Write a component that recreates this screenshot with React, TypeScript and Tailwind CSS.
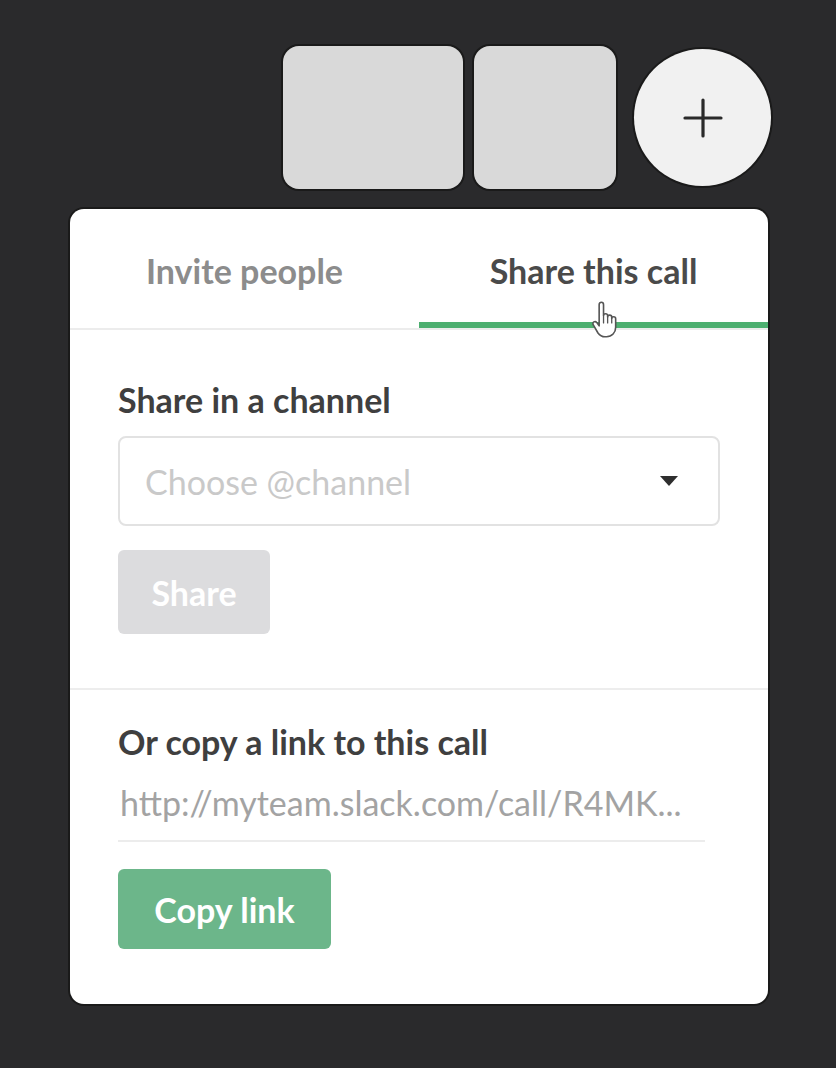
import React from 'react'

const HandCursor = () => (
    <svg width="30" height="38" viewBox="0 0 20 26" className="absolute left-[590px] top-[301px]">
        <path
            d="M6 2.5c0-1 .7-1.6 1.5-1.6S9 1.5 9 2.5V10c0-.8.6-1.3 1.4-1.3s1.4.5 1.4 1.3v1c0-.8.6-1.3 1.4-1.3s1.4.5 1.4 1.3v1c0-.8.6-1.2 1.3-1.2s1.4.5 1.4 1.3v5.8c0 3.8-2.6 6.6-6.3 6.6H10c-2.2 0-3.6-.9-4.8-2.6L2 16.4c-.5-.8-.3-1.7.4-2.1.7-.4 1.5-.2 2 .5L6 17V2.5z"
            fill="#ffffff"
            stroke="#555"
            strokeWidth="1.1"
            strokeLinejoin="round"
        />
        <path d="M9 10v5M11.8 11v4M14.6 12v3" stroke="#555" strokeWidth="0.9" strokeLinecap="round" />
    </svg>
)

const App = () => {
    return (
        <div className="relative w-[836px] h-[1068px] bg-[#2a2a2c] pl-[70px] pt-[46px]" style={{ fontFamily: 'Lato, "Open Sans", sans-serif' }}>
            <div className="flex items-center w-[701px] justify-end">
                <div className="w-[180px] h-[143px] rounded-[16px] bg-[#d9d9d9] ring-2 ring-[#1a1a1a]"></div>
                <div className="ml-[11px] w-[142px] h-[143px] rounded-[16px] bg-[#d9d9d9] ring-2 ring-[#1a1a1a]"></div>
                <div className="ml-[18px] w-[137px] h-[137px] rounded-full bg-[#f1f1f1] ring-2 ring-[#1a1a1a] flex items-center justify-center">
                    <svg width="40" height="40" viewBox="0 0 40 40">
                        <path d="M20 2v36M2 20h36" stroke="#2a2a2a" strokeWidth="3.2" strokeLinecap="round" />
                    </svg>
                </div>
            </div>

            <div className="mt-[20px] w-[698px] h-[795px] bg-white rounded-[14px] ring-2 ring-[#1a1a1a] flex flex-col overflow-hidden">
                <div className="flex h-[121px] border-b-2 border-[#ececec]">
                    <div className="w-1/2 flex items-center justify-center text-[34px] font-bold text-[#8c8c8c] pt-[4px]">Invite people</div>
                    <div className="w-1/2 flex flex-col">
                        <div className="flex-1 flex items-center justify-center text-[34px] font-bold text-[#4a4a4a] pt-[10px]">Share this call</div>
                        <div className="h-[6px] bg-[#4daf70]"></div>
                    </div>
                </div>

                <div className="px-[48px] pt-[50px] pb-[54px] border-b-2 border-[#ededed]">
                    <div className="text-[34px] font-bold text-[#3f3f3f] leading-[40px]">Share in a channel</div>
                    <div className="mt-[16px] h-[90px] rounded-[8px] border-2 border-[#e2e2e2] flex items-center justify-between pl-[25px] pr-[40px]">
                        <span className="text-[34px] text-[#c9c9c9]">Choose @channel</span>
                        <svg width="18" height="10" viewBox="0 0 18 10">
                            <path d="M0 0h18L9 10z" fill="#2e2e2e" />
                        </svg>
                    </div>
                    <div className="mt-[24px] w-[152px] h-[84px] rounded-[6px] bg-[#dcdcde] flex items-center justify-center text-[34px] font-bold text-white">Share</div>
                </div>

                <div className="px-[48px] pt-[32px]">
                    <div className="text-[34px] font-bold text-[#3f3f3f] leading-[40px]">Or copy a link to this call</div>
                    <div className="mt-[21px] w-[587px] pb-[17px] border-b-2 border-[#ececec] text-[34px] text-[#a3a3a3] leading-[40px] pl-[2px] whitespace-nowrap">http://myteam.slack.com/call/R4MK...</div>
                    <div className="mt-[27px] w-[213px] h-[80px] rounded-[6px] bg-[#6cb68a] flex items-center justify-center text-[34px] font-bold text-white">Copy link</div>
                </div>
            </div>

            <HandCursor />
        </div>
    )
}

export default App
